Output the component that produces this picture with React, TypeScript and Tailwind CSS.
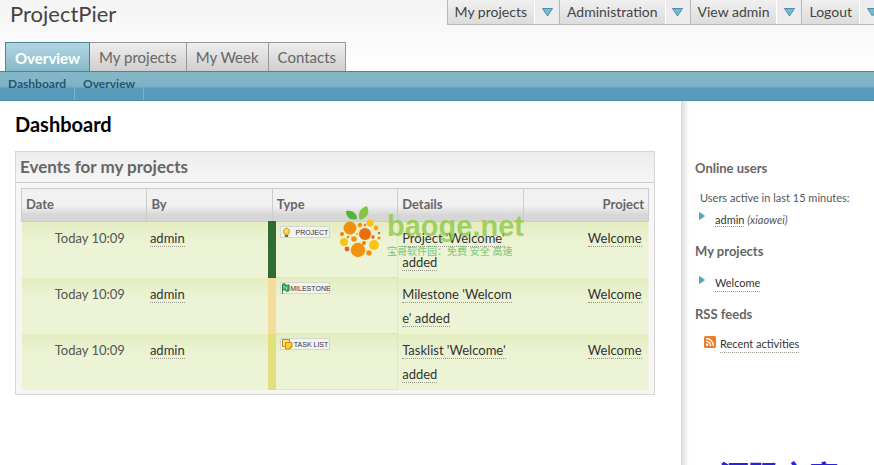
import type { ReactNode } from 'react';

interface EventRow {
  type: 'project' | 'milestone' | 'tasklist';
  label: string;
  bar: string;
  lines: string[];
}

const events: EventRow[] = [
  { type: 'project', label: 'PROJECT', bar: 'border-l-[#2f6b33]', lines: ["Project 'Welcome'", 'added'] },
  { type: 'milestone', label: 'MILESTONE', bar: 'border-l-[#f4dc9c]', lines: ["Milestone 'Welcom", "e' added"] },
  { type: 'tasklist', label: 'TASK LIST', bar: 'border-l-[#e0e07c]', lines: ["Tasklist 'Welcome'", 'added'] },
];

const accountMenu = ['My projects', 'Administration', 'View admin', 'Logout'];
const tabs = ['My projects', 'My Week', 'Contacts'];

// Berry dots of the logo: cx, cy, r, fill
const berries: [number, number, number, string][] = [
  [20, 22, 6.5, '#f0900f'],
  [35, 28, 6, '#ee6c0c'],
  [28, 44, 7.2, '#f3940f'],
  [44, 39, 5, '#fbc412'],
  [40, 17, 3.5, '#fbc412'],
  [14, 36, 4, '#fbc412'],
  [30, 19, 2.2, '#f0900f'],
  [24, 33, 2.8, '#f0900f'],
  [46, 22, 2.4, '#f3a51c'],
  [12, 28, 2, '#ee7c0c'],
  [17, 43, 2.4, '#e8601c'],
  [39, 47, 2.7, '#f0900f'],
  [34, 37, 2, '#ee7c0c'],
  [43, 31, 1.7, '#e8601c'],
  [49, 32, 1.6, '#f0900f'],
  [49, 27, 1.2, '#e8601c'],
  [27, 28, 1.2, '#fbc412'],
  [18, 31, 1.2, '#ee7c0c'],
  [35, 19, 1.2, '#ee7c0c'],
];

function DotLink({ children }: { children: ReactNode }) {
  return (
    <a href="#" className="border-b border-dotted border-[#9a9a8c] text-[#333]">
      {children}
    </a>
  );
}

function DownArrow() {
  return (
    <svg width="11" height="9" viewBox="0 0 11 9" aria-hidden="true">
      <path d="M0.5 0.5h10L5.5 8z" fill="#7ab8cc" stroke="#4a90a8" />
    </svg>
  );
}

function Bullet() {
  return (
    <svg width="6" height="8" viewBox="0 0 6 8" className="-mt-2 shrink-0" aria-hidden="true">
      <path d="M0.5 0.5v7L5.5 4z" fill="#5aa5bb" stroke="#5aa5bb" />
    </svg>
  );
}

function TypeIcon({ type }: { type: EventRow['type'] }) {
  if (type === 'project') {
    return (
      <svg width="11" height="11" viewBox="0 0 11 11" className="shrink-0">
        <path d="M3.700 7.200C2.100 6 2.100 1.200 5.500 1.200s3.400 4.800 1.800 6z" fill="#ffe04a" stroke="#c88a14" />
        <path d="M3.800 8h3.400v2H3.800z" fill="#6a6a6a" />
      </svg>
    );
  }
  if (type === 'milestone') {
    return (
      <svg width="9" height="11" viewBox="0 0 9 11" className="shrink-0">
        <path d="M1.500 11V2" stroke="#4d7a58" />
        <path d="M1.500 1.200C3 .2 4 .8 5 1.800c1 .8 2 .6 3 0v6c-1.400.8-2.400.6-3.400-.4-1-.8-2-.8-3.100 0z" fill="#37b65a" stroke="#168038" />
        <path d="M3 3v2.500M5.500 4v2.500" stroke="#a8ecb0" />
      </svg>
    );
  }
  return (
    <svg width="12" height="11" viewBox="0 0 12 11" className="shrink-0">
      <path d="M1.500 .5h7v7h-7z" fill="#ffe27a" stroke="#c98a12" />
      <path d="M4.500 3.500h6.500v4.500l-2 2H4.500z" fill="#ffd23c" stroke="#c98a12" />
      <path d="M9 10V8h2" fill="#fff3b0" stroke="#c98a12" />
    </svg>
  );
}

function TypeBadge({ type, label }: { type: EventRow['type']; label: string }) {
  return (
    <span className="flex h-3 w-[50px] items-center justify-between border border-[#d4d8d0] bg-[#f3f4f0] pr-px font-['Liberation_Sans',sans-serif] text-[7px] leading-none whitespace-nowrap text-[#33333f]">
      <TypeIcon type={type} />
      {label}
    </span>
  );
}

function SideHeading({ children }: { children: ReactNode }) {
  return <h2 className="text-[13px] leading-5 font-bold text-[#666]">{children}</h2>;
}

function Watermark() {
  return (
    <div className="pointer-events-none absolute top-[54px] left-[314px] flex">
      <svg width="56" height="54" viewBox="0 0 56 54" aria-hidden="true">
        <path d="M27 13C20 15 16 11 16 5c6-1 11 2 11 8z" fill="#55b23c" />
        <path d="M30 14c-3-6 0-12 7-14 3 6 1 12-7 14z" fill="#84c441" />
        {berries.map(([cx, cy, r, fill], i) => (
          <circle key={i} cx={cx} cy={cy} r={r} fill={fill} />
        ))}
      </svg>
      <div className="pt-1 pl-px">
        <div className="font-['Liberation_Sans',sans-serif] text-[29px] leading-8 font-bold text-[#8cc63f]/75">baoge.net</div>
        <div className="pt-1 font-['Liberation_Sans','Noto_Sans_CJK_SC',sans-serif] text-[10px] leading-3 font-medium whitespace-nowrap text-[#6cc06c]/80">
          宝哥软件园：免费 安全 高速
        </div>
      </div>
    </div>
  );
}

export default function App() {
  return (
    <div className="flex h-screen flex-col overflow-hidden bg-white font-['Lato','Noto_Sans_CJK_SC',sans-serif] text-[13px] text-[#555]">
      {/* Header */}
      <header className="flex justify-between bg-linear-to-b from-[#f4f4f4] to-white">
        <div>
          <h1 className="pt-0.5 pl-[10px] text-[22px] leading-6 text-[#444]">ProjectPier</h1>
          <nav className="mt-4 flex pl-[5px] text-[15px] leading-7">
            <a href="#" className="-mb-px border border-b-0 border-[#4f8496] bg-linear-to-b from-[#b4d6e4] to-[#84b8c6] px-[9px] pt-px font-bold text-white">
              Overview
            </a>
            {tabs.map((tab) => (
              <a key={tab} href="#" className="border-t border-r border-[#999] bg-linear-to-b from-[#eee] to-[#cfcfcf] px-[9px] text-[#666]">
                {tab}
              </a>
            ))}
          </nav>
        </div>
        <nav className="-mr-[10px] flex h-[25px] shrink-0 text-sm text-[#444]">
          {accountMenu.map((item) => (
            <div key={item} className="flex border-b border-l border-[#b8b8b8] bg-linear-to-b from-[#f0f0f0] to-[#dcdcdc]">
              <a href="#" className="px-[7px] leading-6">{item}</a>
              <button type="button" aria-label={`${item} menu`} className="flex w-[25px] items-center justify-center border-l border-white bg-[#ececec]">
                <DownArrow />
              </button>
            </div>
          ))}
        </nav>
      </header>

      {/* Sub navigation */}
      <nav className="flex h-[30px] shrink-0 border-t border-b border-t-[#4f8496] border-b-[#4f8ea8] bg-linear-to-b from-[#84b8c6] from-0% via-[#7fb2ca] via-50% to-[#579aba] to-60% text-xs font-bold text-[#24566c]">
        <a href="#" className="mt-1.5 border-r border-[#7db2c8] px-2 leading-3">Dashboard</a>
        <a href="#" className="mt-1.5 border-r border-[#7db2c8] px-2 leading-3">Overview</a>
      </nav>

      <div className="flex min-h-0 flex-1">
        <main className="min-w-0 flex-1 pt-[11px] pr-[26px] pl-[15px]">
          <h1 className="text-xl leading-6 font-bold text-black">Dashboard</h1>
          <section className="relative mt-[15px] border border-[#d6d6d6] bg-[#f6f6f6]">
            <h2 className="border-b border-[#ccc] bg-linear-to-b from-[#ececec] to-[#f6f6f6] pl-1 text-[17px] leading-[30px] font-bold text-[#666]">
              Events for my projects
            </h2>
            <div className="px-[5px] pt-[5px] pb-1">
              <table className="w-full table-fixed border-collapse">
                <thead>
                  <tr className="h-[33px] bg-linear-to-b from-[#f1f1f1] from-50% to-[#d6d6d6] to-80% text-left text-[#666]">
                    <th className="border border-[#ccc] px-1">Date</th>
                    <th className="border border-[#ccc] px-1">By</th>
                    <th className="border border-[#ccc] px-1">Type</th>
                    <th className="border border-[#ccc] px-1">Details</th>
                    <th className="border border-[#ccc] px-1 text-right">Project</th>
                  </tr>
                </thead>
                <tbody>
                  {events.map((event) => (
                    <tr key={event.type} className="h-14 bg-linear-to-b from-[#e3edc0] to-[#edf4d6] to-40% align-top leading-6">
                      <td className="pt-1 pr-[22px] text-right">Today 10:09</td>
                      <td className="pt-1 pl-[3px]">
                        <DotLink>admin</DotLink>
                      </td>
                      <td className={`border-r border-b border-l-8 border-r-[#dbe8bd] border-b-[#dbe8bd] pt-1 pl-1 ${event.bar}`}>
                        <TypeBadge type={event.type} label={event.label} />
                      </td>
                      <td className="pt-1 pl-1">
                        {event.lines.map((line) => (
                          <div key={line} className="whitespace-nowrap">
                            <DotLink>{line}</DotLink>
                          </div>
                        ))}
                      </td>
                      <td className="pt-1 pr-[7px] text-right">
                        <DotLink>Welcome</DotLink>
                      </td>
                    </tr>
                  ))}
                </tbody>
              </table>
            </div>
            <Watermark />
          </section>
        </main>

        {/* Sidebar */}
        <aside className="flex w-[193px] shrink-0">
          <div className="w-2 bg-linear-to-r from-[#d8d8d8] to-white" />
          <div className="flex-1 pt-[57px] pl-[6px] text-[11px] leading-4 whitespace-nowrap">
            <SideHeading>Online users</SideHeading>
            <p className="mt-3 pl-[5px]">Users active in last 15 minutes:</p>
            <div className="mt-[6px] flex items-center gap-[10px] pl-1">
              <Bullet />
              <span>
                <DotLink>admin</DotLink> <em>(xiaowei)</em>
              </span>
            </div>
            <div className="mt-[13px]">
              <SideHeading>My projects</SideHeading>
            </div>
            <div className="mt-[14px] flex items-center gap-[10px] pl-1">
              <Bullet />
              <DotLink>Welcome</DotLink>
            </div>
            <div className="mt-3">
              <SideHeading>RSS feeds</SideHeading>
            </div>
            <div className="mt-3 flex gap-1 pl-[9px]">
              <svg width="12" height="12" viewBox="0 0 12 12" aria-hidden="true">
                <rect width="12" height="12" rx="1.500" fill="#ee7d2b" />
                <circle cx="3.200" cy="8.800" r="1.200" fill="#fff" />
                <path d="M2 5.300a4.700 4.700 0 0 1 4.700 4.700M2 2.500A7.500 7.500 0 0 1 9.500 10" fill="none" stroke="#fff" strokeWidth="1.300" />
              </svg>
              <DotLink>Recent activities</DotLink>
            </div>
            <p className="mt-[106px] pl-6 text-[30px] leading-8 font-bold text-[#2a20e0]">源码之家</p>
          </div>
        </aside>
      </div>
    </div>
  );
}
